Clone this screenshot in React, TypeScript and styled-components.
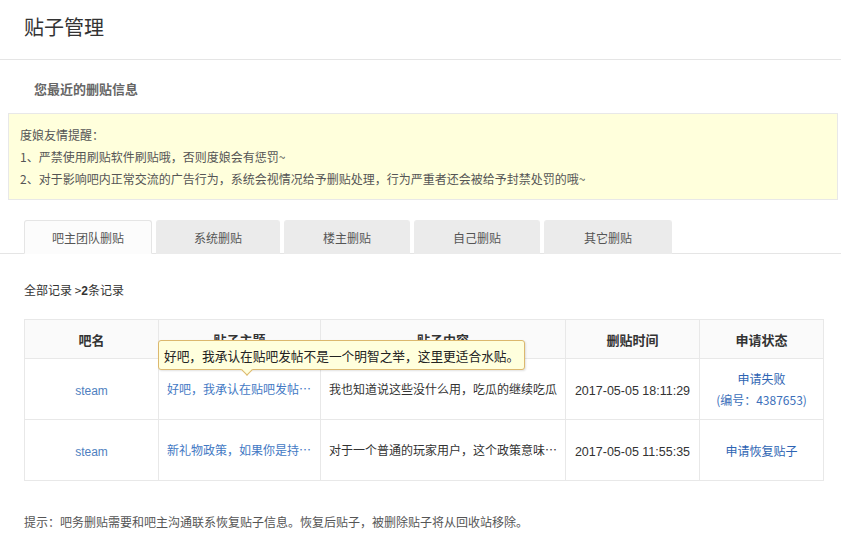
import React from 'react';
import styled, { createGlobalStyle } from 'styled-components';

const GlobalStyle = createGlobalStyle`
  html, body {
    margin: 0;
    padding: 0;
    background: #fff;
  }
  body {
    font-family: "Liberation Sans", Arial, "Noto Sans CJK SC", sans-serif;
    font-size: 12px;
    color: #333;
  }
`;

type Record = {
  bar: string;
  title: string;
  content: string;
  time: string;
  status: string;
  code?: string;
};

const records: Record[] = [
  {
    bar: 'steam',
    title: '好吧，我承认在贴吧发帖不是一个明智之举，这里更适合水贴。',
    content: '我也知道说这些没什么用，吃瓜的继续吃瓜',
    time: '2017-05-05 18:11:29',
    status: '申请失败',
    code: '4387653',
  },
  {
    bar: 'steam',
    title: '新礼物政策，如果你是持有大量礼物的玩家',
    content: '对于一个普通的玩家用户，这个政策意味着什么',
    time: '2017-05-05 11:55:35',
    status: '申请恢复贴子',
  },
];

const tabs = ['吧主团队删贴', '系统删贴', '楼主删贴', '自己删贴', '其它删贴'];

export default function App() {
  return (
    <Page>
      <GlobalStyle />
      <Header>
        <Title>贴子管理</Title>
      </Header>
      <Subtitle>您最近的删贴信息</Subtitle>
      <Notice>
        <p>度娘友情提醒：</p>
        <p>1、严禁使用刷贴软件刷贴哦，否则度娘会有惩罚~</p>
        <p>2、对于影响吧内正常交流的广告行为，系统会视情况给予删贴处理，行为严重者还会被给予封禁处罚的哦~</p>
      </Notice>
      <TabBar>
        {tabs.map((t, i) => (
          <Tab key={t} $active={i === 0}>
            {t}
          </Tab>
        ))}
      </TabBar>
      <Crumb>
        全部记录 &gt;<b>2</b>条记录
      </Crumb>
      <TableWrap>
        <Table>
          <colgroup>
            <col style={{ width: 134 }} />
            <col style={{ width: 162 }} />
            <col style={{ width: 245 }} />
            <col style={{ width: 134 }} />
            <col style={{ width: 124 }} />
          </colgroup>
          <thead>
            <tr>
              <Th>吧名</Th>
              <Th>贴子主题</Th>
              <Th>贴子内容</Th>
              <Th>删贴时间</Th>
              <Th>申请状态</Th>
            </tr>
          </thead>
          <tbody>
            {records.map((r, i) => (
              <Row key={i}>
                <Td>
                  <BarLink>{r.bar}</BarLink>
                </Td>
                <Td $left>
                  <Ellipsis $link>{r.title}</Ellipsis>
                </Td>
                <Td $left>
                  <Ellipsis>{r.content}</Ellipsis>
                </Td>
                <Td>
                  <Time>{r.time}</Time>
                </Td>
                <Td>
                  <Status>{r.status}</Status>
                  {r.code && <Code>(编号：{r.code})</Code>}
                </Td>
              </Row>
            ))}
          </tbody>
        </Table>
        <Tooltip>{records[0].title}</Tooltip>
      </TableWrap>
      <Tip>提示：吧务删贴需要和吧主沟通联系恢复贴子信息。恢复后贴子，被删除贴子将从回收站移除。</Tip>
    </Page>
  );
}

const Page = styled.div`
  width: 841px;
  height: 545px;
  overflow: hidden;
`;

const Header = styled.header`
  height: 59px;
  border-bottom: 1px solid #e5e5e5;
  padding-left: 24px;
  display: flex;
  align-items: center;
`;

const Title = styled.h1`
  margin: 0;
  font-size: 20px;
  font-weight: normal;
  color: #333;
  font-family: "Noto Sans CJK SC", sans-serif;
  position: relative;
  top: -3px;
`;

const Subtitle = styled.h2`
  margin: 0;
  padding: 19px 0 0 34px;
  height: 34px;
  box-sizing: border-box;
  line-height: 20px;
  font-size: 13px;
  font-weight: bold;
  color: #666;
  font-family: "Noto Sans CJK SC", sans-serif;
`;

const Notice = styled.div`
  margin: 19px 3px 0 8px;
  height: 87px;
  box-sizing: border-box;
  background: #ffffdc;
  border: 1px solid #e8e8e8;
  padding: 10px 11px;
  color: #555;
  font-family: "Noto Sans CJK SC", sans-serif;

  p {
    margin: 0;
    line-height: 22px;
    font-size: 12px;
  }
`;

const TabBar = styled.nav`
  margin-top: 20px;
  padding-left: 24px;
  display: flex;
  gap: 4px;
  border-bottom: 1px solid #e5e5e5;
  height: 33px;
`;

const Tab = styled.div<{ $active?: boolean }>`
  width: 124px;
  height: 34px;
  box-sizing: border-box;
  display: flex;
  align-items: center;
  justify-content: center;
  font-size: 12px;
  color: #555;
  border-radius: 3px 3px 0 0;
  background: ${(p) => (p.$active ? '#fcfcfc' : '#ebebeb')};
  border: 1px solid ${(p) => (p.$active ? '#e5e5e5' : '#ebebeb')};
  border-bottom: ${(p) => (p.$active ? '1px solid #fcfcfc' : 'none')};
  font-family: "Noto Sans CJK SC", sans-serif;
  &:first-child,
  &:last-child {
    width: 128px;
  }
  &:nth-child(3),
  &:nth-child(4) {
    width: 126px;
  }
`;

const Crumb = styled.div`
  margin-top: 27px;
  padding-left: 24px;
  line-height: 18px;
  font-size: 12px;
  color: #333;
  font-family: "Noto Sans CJK SC", sans-serif;
  b {
    font-family: "Liberation Sans", sans-serif;
  }
`;

const TableWrap = styled.div`
  position: relative;
  margin: 19px 0 0 24px;
  width: 800px;
`;

const Table = styled.table`
  width: 800px;
  border-collapse: collapse;
  table-layout: fixed;
  font-family: "Noto Sans CJK SC", sans-serif;
`;

const Row = styled.tr`
  height: 61px;
`;

const Th = styled.th`
  height: 38px;
  background: #fafafa;
  border: 1px solid #e8e8e8;
  font-size: 13px;
  font-weight: bold;
  color: #333;
  padding: 0;
`;

const Td = styled.td<{ $left?: boolean }>`
  border: 1px solid #e8e8e8;
  text-align: ${(p) => (p.$left ? 'left' : 'center')};
  padding: ${(p) => (p.$left ? '0 4px 0 8px' : '0 4px')};
  font-size: 12px;
  color: #333;
  vertical-align: middle;
`;

const BarLink = styled.span`
  color: #4f7fc0;
  font-family: "Liberation Sans", Arial, sans-serif;
`;

const Ellipsis = styled.div<{ $link?: boolean }>`
  white-space: nowrap;
  overflow: hidden;
  text-overflow: ellipsis;
  color: ${(p) => (p.$link ? '#4379c4' : '#333')};
  font-size: 12px;
  margin-top: -2px;
`;

const Time = styled.span`
  font-family: "Liberation Sans", Arial, sans-serif;
  font-size: 12.5px;
  color: #333;
`;

const Status = styled.div`
  color: #2d64b3;
  line-height: 21px;
  font-size: 12px;
`;

const Code = styled.div`
  color: #3b6fba;
  line-height: 21px;
  font-size: 12px;
`;

const Tooltip = styled.div`
  position: absolute;
  left: 134px;
  top: 21px;
  height: 30px;
  box-sizing: border-box;
  padding: 0 5px;
  display: flex;
  align-items: center;
  background: #ffffdd;
  border: 1px solid #dcb86e;
  border-radius: 3px;
  box-shadow: 1px 1px 2px rgba(0, 0, 0, 0.12);
  font-size: 12.7px;
  color: #222;
  white-space: nowrap;
  font-family: "Noto Sans CJK SC", sans-serif;

  &::after {
    content: '';
    position: absolute;
    left: 84px;
    bottom: -5px;
    width: 7px;
    height: 7px;
    background: #ffffdd;
    border-right: 1px solid #dcb86e;
    border-bottom: 1px solid #dcb86e;
    transform: rotate(45deg);
  }
`;

const Tip = styled.div`
  margin-top: 32px;
  padding-left: 24px;
  font-size: 12px;
  color: #555;
  line-height: 18px;
  font-family: "Noto Sans CJK SC", sans-serif;
`;
